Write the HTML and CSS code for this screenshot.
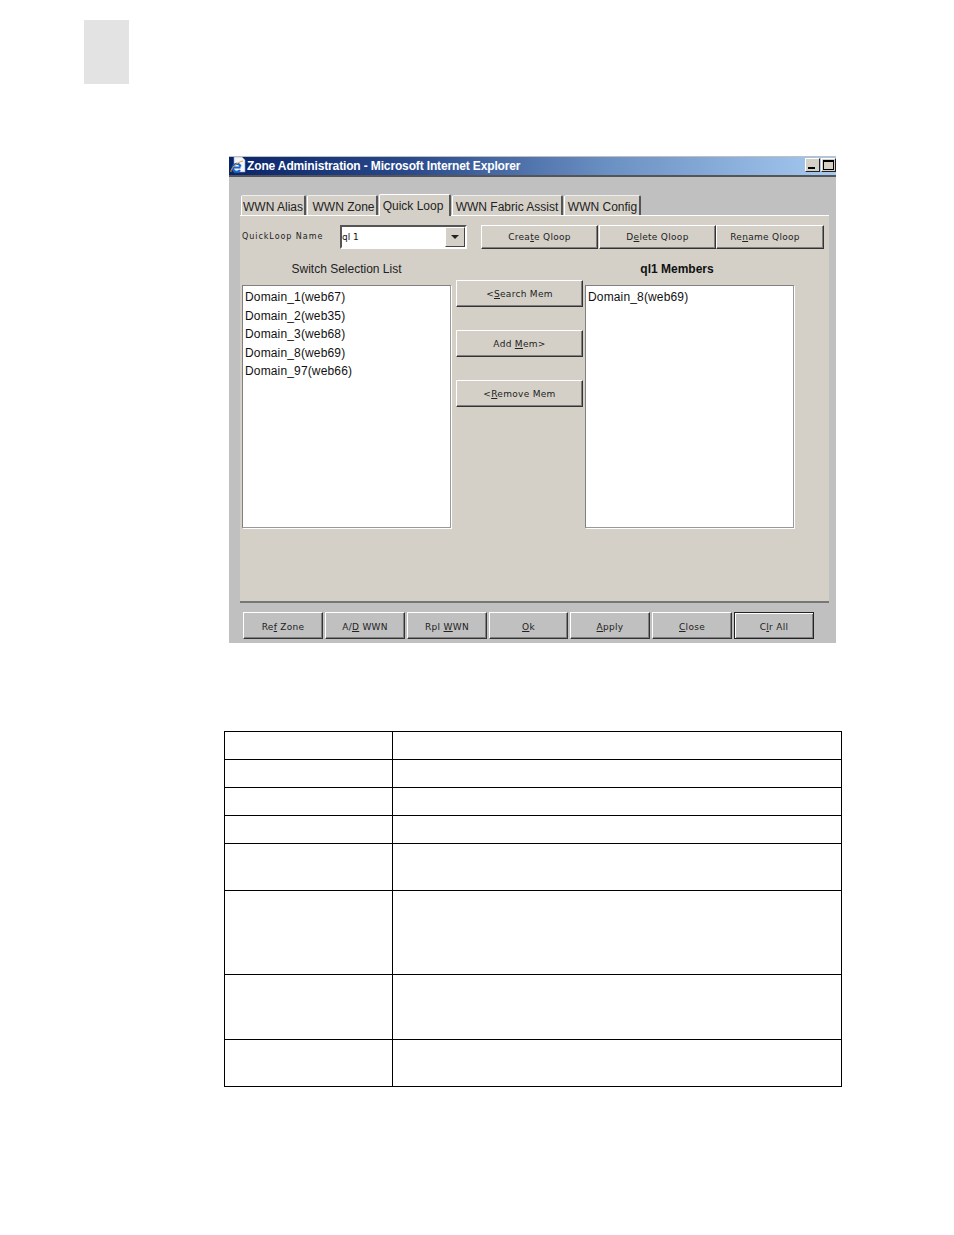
FILE: index.html
```html
<!DOCTYPE html>
<html lang="en">
<head>
<meta charset="utf-8">
<title>Zone Administration</title>
<link rel="stylesheet" href="styles.css">
</head>
<body>
<div class="page-tab"></div>
<section class="window">
  <header class="titlebar">
    <svg class="ie-icon" viewBox="0 0 16 16" aria-hidden="true">
      <path d="M4 0h8l3 3v12H4z" fill="#f4f6fb" stroke="#8aa0c8" stroke-width=".6"/>
      <path d="M3.5 10.5h7M10 13.2A4 4 0 1 1 10.6 9.6" fill="none" stroke="#1c63c8" stroke-width="2.2"/>
      <path d="M1 15C0 12 7 5 13 4" fill="none" stroke="#e8a020" stroke-width="1"/>
    </svg>
    <span class="title-text">Zone Administration - Microsoft Internet Explorer</span>
    <div class="win-controls">
      <span class="win-btn"><i class="min-glyph"></i></span>
      <span class="win-btn"><i class="max-glyph"></i></span>
    </div>
  </header>
  <nav class="tabs">
    <span class="tab tab-alias">WWN Alias</span>
    <span class="tab tab-zone">WWN Zone</span>
    <span class="tab tab-active">Quick Loop</span>
    <span class="tab tab-fabric">WWN Fabric Assist</span>
    <span class="tab tab-config">WWN Config</span>
  </nav>
  <main class="panel">
    <div class="name-row">
      <label class="name-label">QuickLoop Name</label>
      <div class="combo">
        <span class="combo-value">ql 1</span>
        <span class="combo-arrow"><i></i></span>
      </div>
      <div class="name-actions">
        <button class="btn btn-create">Crea<u>t</u>e Qloop</button>
        <button class="btn btn-delete">D<u>e</u>lete Qloop</button>
        <button class="btn btn-rename">Re<u>n</u>ame Qloop</button>
      </div>
    </div>
    <div class="columns">
      <div class="col-head">Switch Selection List</div>
      <div></div>
      <div class="col-head col-head-strong">ql1 Members</div>
      <ul class="list">
        <li>Domain_1(web67)</li>
        <li>Domain_2(web35)</li>
        <li>Domain_3(web68)</li>
        <li>Domain_8(web69)</li>
        <li>Domain_97(web66)</li>
      </ul>
      <div class="mid-actions">
        <button class="btn btn-mid">&lt;<u>S</u>earch Mem</button>
        <button class="btn btn-mid">Add <u>M</u>em&gt;</button>
        <button class="btn btn-mid">&lt;<u>R</u>emove Mem</button>
      </div>
      <ul class="list">
        <li>Domain_8(web69)</li>
      </ul>
    </div>
  </main>
  <footer class="footer-actions">
    <button class="btn btn-foot">Re<u>f</u> Zone</button>
    <button class="btn btn-foot">A/<u>D</u> WWN</button>
    <button class="btn btn-foot">Rpl <u>W</u>WN</button>
    <button class="btn btn-foot btn-ok"><u>O</u>k</button>
    <button class="btn btn-foot"><u>A</u>pply</button>
    <button class="btn btn-foot"><u>C</u>lose</button>
    <button class="btn btn-foot btn-default">C<u>l</u>r All</button>
  </footer>
</section>
<table class="data-table">
  <colgroup><col class="col-a"><col></colgroup>
  <tbody>
    <tr class="h28"><td></td><td></td></tr>
    <tr class="h28"><td></td><td></td></tr>
    <tr class="h28"><td></td><td></td></tr>
    <tr class="h28"><td></td><td></td></tr>
    <tr class="h47"><td></td><td></td></tr>
    <tr class="h84"><td></td><td></td></tr>
    <tr class="h65"><td></td><td></td></tr>
    <tr class="h47"><td></td><td></td></tr>
  </tbody>
</table>
</body>
</html>
```
FILE: styles.css
```css
* { box-sizing: border-box; }
html, body { margin: 0; padding: 0; background: #fff; }
body { width: 954px; height: 1235px; overflow: hidden; padding-top: 20px; font-family: "Liberation Sans", Arial, sans-serif; color: #111; }

.page-tab { width: 45px; height: 64px; margin-left: 84px; background: #e3e3e3; }

.window { width: 607px; height: 487px; margin: 72px 0 0 229px; background: #c0c0c0; padding-top: 1px; display: flex; flex-direction: column; }
.titlebar { height: 20px; flex: none; display: flex; align-items: center; padding: 0 0 2px 1px; border-bottom: 2px solid #555; background: linear-gradient(90deg, #0a246a 0%, #2a4a8c 30%, #6a8fc2 62%, #a6caf0 100%); background-clip: padding-box; }
.ie-icon { width: 16px; height: 16px; flex: none; }
.title-text { margin: 2px 0 0 1px; font: bold 12px "Liberation Sans", sans-serif; letter-spacing: -.14px; color: #fff; white-space: nowrap; }
.win-controls { margin-left: auto; display: flex; gap: 1px; }
.win-btn { width: 15px; height: 14px; background: #d4d0c8; border: 1px solid; border-color: #fff #222 #222 #fff; display: flex; position: relative; }
.min-glyph { width: 7px; height: 2px; background: #000; margin: 8px 0 0 2px; }
.max-glyph { width: 11px; height: 10px; border: 1px solid #000; border-top-width: 2px; margin: 1px; }

.tabs { display: flex; height: 20px; margin: 18px 0 0 12px; flex: none; align-items: flex-end; font-size: 12px; }
.tab { height: 20px; background: #d4d0c8; border-top: 1px solid #eee; border-left: 1px solid #fff; border-right: 2px solid #555; border-radius: 2px 2px 0 0; margin-right: 1px; display: flex; align-items: center; justify-content: center; white-space: nowrap; padding-top: 3px; color: #222; }
.tab-alias { width: 65px; }
.tab-zone { width: 71px; padding-left: 3px; }
.tab-active { width: 72px; height: 22px; margin-bottom: -1px; padding: 1px 3px 0 0; position: relative; z-index: 1; border-top-color: #fff; }
.tab-fabric { width: 111px; }
.tab-config { width: 77px; padding-left: 1px; }

.panel { width: 589px; height: 388px; margin-left: 11px; flex: none; background: #d4d0c8; border-top: 1px solid #fff; border-bottom: 2px solid #777; padding: 9px 0 0 2px; }

.name-row { display: flex; height: 24px; align-items: stretch; }
.name-label { width: 98px; font: 8px/24px "DejaVu Sans", sans-serif; letter-spacing: .95px; color: #222; white-space: nowrap; }
.combo { width: 127px; display: flex; border: 2px solid; border-color: #555 #fff #fff #555; background: #fff; }
.combo-value { flex: 1; font: 9px/20px "DejaVu Sans", sans-serif; color: #111; }
.combo-arrow { width: 20px; background: #d4d0c8; border: 1px solid; border-color: #fff #444 #444 #fff; display: flex; align-items: center; justify-content: center; }
.combo-arrow i { width: 0; height: 0; border: 4px solid transparent; border-top: 4px solid #222; border-bottom: 0; }
.name-actions { display: flex; margin-left: 14px; }

.btn { display: block; background: #d4d0c8; border: 1px solid; border-color: #fff #333 #333 #fff; box-shadow: inset -1px -1px 0 #808080; font: 9px "DejaVu Sans", sans-serif; letter-spacing: .3px; color: #222; padding: 0; white-space: nowrap; }
.btn-create { width: 117px; margin-right: 1px; }
.btn-delete { width: 117px; }
.btn-rename { width: 108px; padding-right: 10px; }

.columns { display: grid; grid-template-columns: 209px 134px 209px; grid-template-rows: 17px auto; margin-top: 12px; }
.columns > .mid-actions { margin: 0 2px 0 5px; width: 127px; }
.col-head { text-align: center; font-size: 12px; line-height: 17px; color: #222; }
.col-head-strong { font-weight: bold; margin-right: 25px; color: #111; }

.list { list-style: none; margin: 7px 0 0; padding: 2px 0 0 2px; height: 243px; background: #fff; border: 1px solid; border-color: #808080 #999 #999 #808080; box-shadow: 1px 1px 0 #fff; font-size: 12px; line-height: 18.6px; letter-spacing: .15px; color: #111; }

.mid-actions { display: flex; flex-direction: column; gap: 23px; margin-top: 2px; padding-top: 2px; }
.btn-mid { height: 27px; }

.footer-actions { display: flex; gap: 2px; margin: 9px 0 0 14px; }
.btn-foot { width: 80px; height: 27px; padding-top: 2px; background: #c0c0c0; }
.btn-ok { width: 79px; }
.btn-default { border-color: #222; box-shadow: inset 1px 1px 0 #fff, inset -1px -1px 0 #808080; }

.data-table { width: 618px; margin: 88px 0 0 224px; border-collapse: collapse; table-layout: fixed; }
.data-table td { border: 1px solid #000; padding: 0; }
.col-a { width: 168px; }
.h28 { height: 28px; }
.h47 { height: 47px; }
.h84 { height: 84px; }
.h65 { height: 65px; }
```
